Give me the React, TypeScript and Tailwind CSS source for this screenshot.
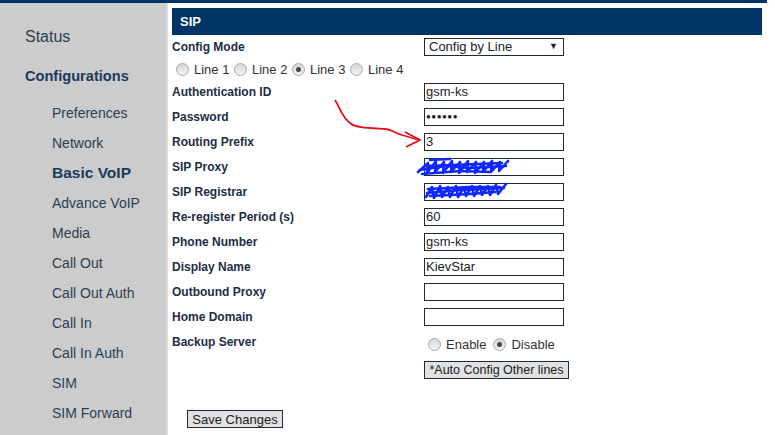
import React from 'react';

const navItems = ['Preferences', 'Network', 'Basic VoIP', 'Advance VoIP', 'Media', 'Call Out', 'Call Out Auth', 'Call In', 'Call In Auth', 'SIM', 'SIM Forward'];

const Radio: React.FC<{ checked?: boolean }> = ({ checked }) => (
  <span className="flex items-center justify-center w-[13px] h-[13px] rounded-full border border-[#a9a9a9] bg-gradient-to-b from-[#d6d6d6] to-[#f4f4f4] shrink-0">
    {checked && <span className="w-[5px] h-[5px] rounded-full bg-[#444]" />}
  </span>
);

const TextBox: React.FC<{ value?: string; small?: boolean }> = ({ value, small }) => (
  <div className="w-[140px] h-[18px] border border-[#1b2b3b] bg-white flex items-center pl-[1px] text-[13px] text-[#222] leading-none">
    {small ? <span className="text-[8px] tracking-[0.5px]">●●●●●●</span> : value}
  </div>
);

const Row: React.FC<{ label: string; h?: string; children?: React.ReactNode }> = ({ label, h = 'h-[25px]', children }) => (
  <div className={`flex items-center ${h}`}>
    <div className="w-[252px] text-[12px] font-bold text-[#1d2d44]">{label}</div>
    {children}
  </div>
);

const App: React.FC = () => {
  return (
    <div className="relative w-[775px] h-[435px] overflow-hidden bg-white font-['Liberation_Sans',Arial,sans-serif]">
      <div className="h-[3px] w-[767px] bg-[#003366]" />
      <div className="flex h-[432px]">
        {/* Sidebar */}
        <div className="w-[168px] bg-[#cccccc] border-r-2 border-[#dcdcdc] pt-[19px] pl-[25px] text-[#2c3e50]">
          <div className="h-[30px] flex items-center text-[16px]">Status</div>
          <div className="h-[30px] mt-[10px] flex items-center text-[14.6px] font-bold text-[#1a3a5c]">Configurations</div>
          <div className="mt-[6px] pl-[27px]">
            {navItems.map((item) => (
              <div
                key={item}
                className={`h-[30px] flex items-center ${item === 'Basic VoIP' ? 'text-[15.5px] font-bold text-[#1a3a5c]' : 'text-[14px]'}`}
              >
                {item}
              </div>
            ))}
          </div>
        </div>

        {/* Main */}
        <div className="pl-[4px]">
          <div className="mt-[5px] w-[590px] h-[27px] bg-[#003366] flex items-center pl-[8px] text-[13px] font-bold text-white">SIP</div>

          <Row label="Config Mode" h="h-[23px]">
            <div className="w-[140px] h-[18px] border border-[#1b2b3b] bg-white flex items-center justify-between pl-[4px] pr-[5px] text-[13px] text-[#222]">
              <span>Config by Line</span>
              <span className="text-[9px]">▼</span>
            </div>
          </Row>

          <div className="h-[21px] flex items-end pl-[4px] text-[13px] text-[#333]">
            {['Line 1', 'Line 2', 'Line 3', 'Line 4'].map((l) => (
              <div key={l} className="flex items-center gap-[5px] w-[58px]">
                <Radio checked={l === 'Line 3'} />
                <span>{l}</span>
              </div>
            ))}
          </div>

          <Row label="Authentication ID"><TextBox value="gsm-ks" /></Row>
          <Row label="Password"><TextBox small /></Row>
          <Row label="Routing Prefix"><TextBox value="3" /></Row>
          <Row label="SIP Proxy"><TextBox /></Row>
          <Row label="SIP Registrar"><TextBox /></Row>
          <Row label="Re-register Period (s)"><TextBox value="60" /></Row>
          <Row label="Phone Number"><TextBox value="gsm-ks" /></Row>
          <Row label="Display Name"><TextBox value="KievStar" /></Row>
          <Row label="Outbound Proxy"><TextBox /></Row>
          <Row label="Home Domain"><TextBox /></Row>

          <div className="flex">
            <div className="w-[252px] h-[25px] flex items-center text-[12px] font-bold text-[#1d2d44]">Backup Server</div>
            <div>
              <div className="h-[25px] mt-[3px] flex items-center pl-[4px] text-[13px] text-[#333]">
                <Radio />
                <span className="ml-[5px] mr-[7px]">Enable</span>
                <Radio checked />
                <span className="ml-[5px]">Disable</span>
              </div>
              <button className="mt-[1px] h-[18px] w-[145px] border border-[#1b2b3b] bg-[#e1e1e1] text-[12.5px] text-[#222] leading-none">
                *Auto Config Other lines
              </button>
            </div>
          </div>

          <button className="mt-[29px] ml-[15px] h-[18px] w-[96px] border border-[#1b2b3b] bg-[#e1e1e1] text-[13px] text-[#222] leading-none">
            Save Changes
          </button>
        </div>
      </div>

      {/* annotations drawn over the screenshot */}
      <svg className="absolute left-0 top-0 pointer-events-none" width="775" height="435">
        <path d="M335 100 C340 108 342 117 350 123 C356 128 368 128 385 129 C392 129 394 133 402 135 L419 140" fill="none" stroke="#e0101a" strokeWidth="1.8" />
        <path d="M405 132 L420 140 L406 147" fill="none" stroke="#e0101a" strokeWidth="1.8" />
        <g fill="none" stroke="#1028ff" strokeWidth="2.6" strokeLinejoin="round" strokeLinecap="round">
          <path d="M418 172 L428 163 L427 173 L436 161 L435 172 L444 162 L443 173 L452 161 L451 172 L460 162 L459 173 L468 161 L467 172 L476 162 L475 173 L484 162 L483 172 L492 161 L491 172 L500 162 L499 171 L508 161" />
          <path d="M420 170 L445 166 L470 168 L506 166 M422 174 L460 171 L490 172 M426 166 L478 164 L502 163 M430 160 L450 159" />
          <path d="M426 197 L432 187 L434 198 L440 186 L442 197 L448 187 L450 197 L456 186 L458 197 L464 187 L466 196 L472 186 L474 196 L480 186 L482 195 L488 186 L490 195 L496 185 L498 194 L506 184" />
          <path d="M427 193 L460 190 L504 188 M428 189 L470 187 L500 187 M430 196 L470 194 L495 192" />
        </g>
      </svg>
    </div>
  );
};

export default App;
